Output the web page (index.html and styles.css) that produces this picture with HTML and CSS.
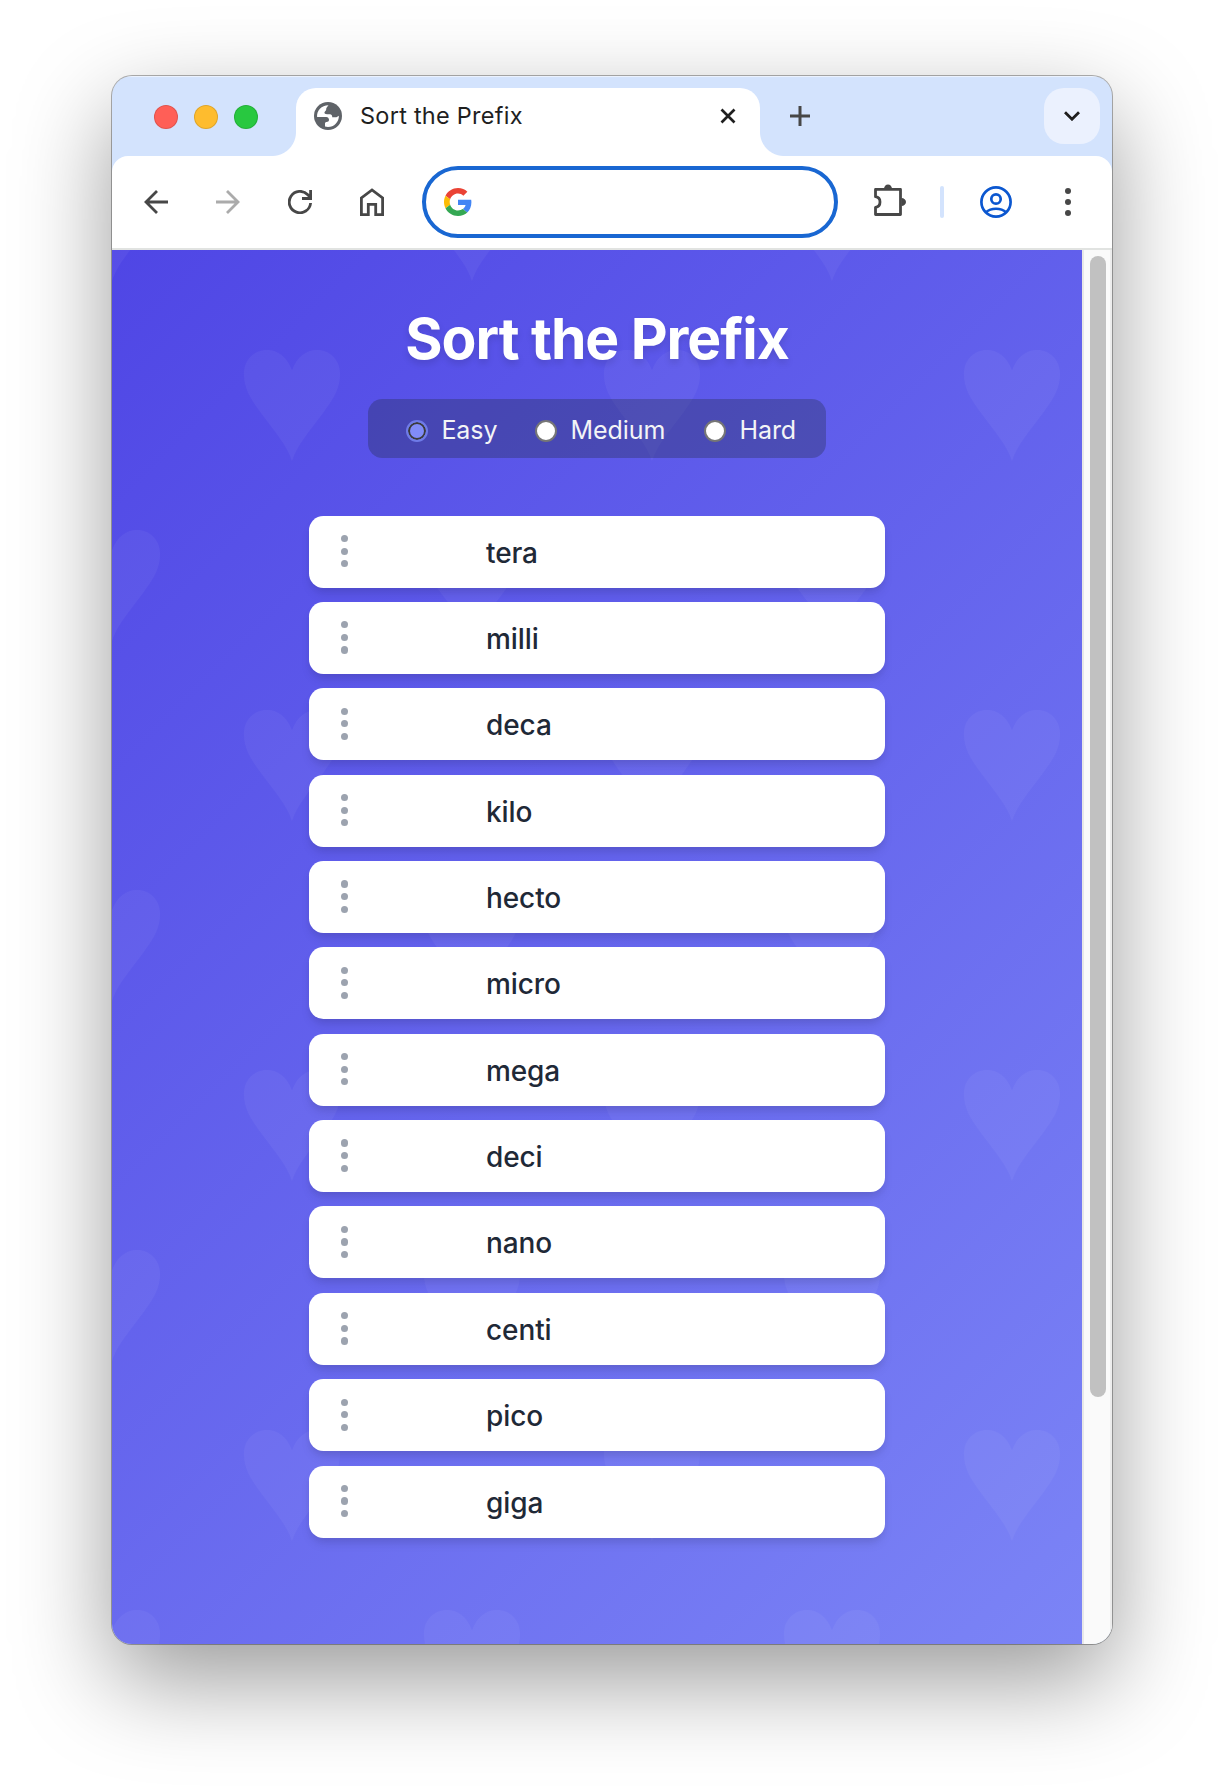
FILE: index.html
```html
<!DOCTYPE html>
<html lang="en">
<head>
<meta charset="utf-8">
<title>Sort the Prefix</title>
<link rel="stylesheet" href="styles.css">
</head>
<body>
<div class="window">
  <header class="tabstrip">
    <div class="lights"><i class="light red"></i><i class="light yellow"></i><i class="light green"></i></div>
    <div class="tab">
      <svg class="globe" width="28" height="28" viewBox="0 0 28 28"><circle cx="14" cy="14" r="14" fill="#5f6368"/><path fill="#fff" d="M14.500 3.200C13.500 4.500 12 5.600 12.200 7.200C12.400 8.700 11 9 10.500 10.200C10 11.500 11.500 12.200 13 12.200L16 12.200C17.300 12.200 18.200 13.200 18.200 14.500L18.200 15.200L21.500 15.200C22.800 15.200 23.800 14.500 24.900 13.700C25 20 20 25 14 25C13 25 12 24.800 11 24.500L11 21.500C11 20.700 11.700 20 12.500 20C14 20 15 19 15 17.700C15 16.200 13.800 15 12.300 15L3.100 15C2.500 8.500 7.500 3.300 14.500 3.200Z"/></svg>
      <span class="tab-title">Sort the Prefix</span>
      <svg class="close" width="16" height="16" viewBox="0 0 16 16"><path d="M1.500 1.500L14.500 14.500M14.500 1.500L1.500 14.500" stroke="#1f1f1f" stroke-width="2.700" fill="none"/></svg>
    </div>
    <svg class="plus" width="20" height="20" viewBox="0 0 20 20"><path d="M10 0V20M0 10H20" stroke="#474747" stroke-width="3" fill="none"/></svg>
    <div class="tab-search"><svg width="16" height="10" viewBox="0 0 16 10"><path d="M1 1.200L8 8.200L15 1.200" stroke="#1f1f1f" stroke-width="2.800" fill="none"/></svg></div>
  </header>
  <nav class="toolbar">
    <svg width="24" height="24" viewBox="0 0 24 24"><path d="M24 12H2M13 1L2 12L13 23" class="stroke"/></svg>
    <svg class="faded" width="24" height="24" viewBox="0 0 24 24"><path d="M0 12H22M11 1L22 12L11 23" class="stroke"/></svg>
    <svg width="24" height="24" viewBox="0 0 24 24"><path d="M22.600 13A10.700 10.700 0 1 1 19.800 4.800L22.500 7.600M22.600 0V8.500H14" class="stroke"/></svg>
    <svg class="home" width="24" height="28" viewBox="0 0 24 28"><path d="M1.400 26.600V10L12 2L22.600 10V26.600H15.700V16.400H8.300V26.600Z" class="stroke"/></svg>
    <div class="omnibox">
      <svg width="28" height="28" viewBox="0 0 48 48"><path fill="#ea4335" d="M24 9.500c3.540 0 6.710 1.220 9.210 3.600l6.850-6.850C35.900 2.380 30.470 0 24 0 14.620 0 6.510 5.380 2.560 13.220l7.980 6.190C12.430 13.720 17.740 9.500 24 9.500z"/><path fill="#4285f4" d="M46.980 24.550c0-1.570-.15-3.090-.38-4.550H24v9.020h12.940c-.58 2.960-2.260 5.480-4.780 7.180l7.730 6c4.510-4.180 7.090-10.360 7.090-17.650z"/><path fill="#fbbc05" d="M10.530 28.590c-.48-1.450-.76-2.990-.76-4.590s.27-3.140.76-4.590l-7.980-6.190C.92 16.460 0 20.120 0 24c0 3.880.92 7.540 2.560 10.780l7.970-6.190z"/><path fill="#34a853" d="M24 48c6.480 0 11.930-2.130 15.890-5.810l-7.730-6c-2.150 1.450-4.920 2.300-8.160 2.300-6.260 0-11.570-4.220-13.470-9.910l-7.980 6.190C6.510 42.620 14.620 48 24 48z"/></svg>
    </div>
    <svg class="puzzle" width="32" height="32" viewBox="0 0 32 32"><path d="M1.500 5.400H26.500V30.500H1.500V23.300C7.500 22.500 7.500 13.500 1.500 12.700Z" class="stroke" stroke-linejoin="round"/><path d="M10 5A4 4.500 0 0 1 18 5ZM27.500 14A4.500 4 0 0 1 27.500 22Z" fill="#474747"/></svg>
    <i class="divider"></i>
    <svg class="profile" width="32" height="32" viewBox="0 0 32 32" fill="none" stroke="#0b57d0" stroke-width="2.700"><circle cx="16" cy="16" r="14.600"/><circle cx="16" cy="13" r="4.700"/><path d="M6 26.200C11 21.600 21 21.600 26 26.200"/></svg>
    <svg class="menu" width="6" height="28" viewBox="0 0 6 28" fill="#474747"><circle cx="3" cy="3" r="3"/><circle cx="3" cy="14" r="3"/><circle cx="3" cy="25" r="3"/></svg>
  </nav>
  <div class="viewport">
    <main class="page">
      <h1>Sort the Prefix</h1>
      <div class="levels">
        <label class="level easy"><i class="radio checked"></i>Easy</label>
        <label class="level medium"><i class="radio"></i>Medium</label>
        <label class="level hard"><i class="radio"></i>Hard</label>
      </div>
      <ul class="list">
        <li><span class="grip"><i></i><i></i><i></i></span>tera</li>
        <li><span class="grip"><i></i><i></i><i></i></span>milli</li>
        <li><span class="grip"><i></i><i></i><i></i></span>deca</li>
        <li><span class="grip"><i></i><i></i><i></i></span>kilo</li>
        <li><span class="grip"><i></i><i></i><i></i></span>hecto</li>
        <li><span class="grip"><i></i><i></i><i></i></span>micro</li>
        <li><span class="grip"><i></i><i></i><i></i></span>mega</li>
        <li><span class="grip"><i></i><i></i><i></i></span>deci</li>
        <li><span class="grip"><i></i><i></i><i></i></span>nano</li>
        <li><span class="grip"><i></i><i></i><i></i></span>centi</li>
        <li><span class="grip"><i></i><i></i><i></i></span>pico</li>
        <li><span class="grip"><i></i><i></i><i></i></span>giga</li>
      </ul>
    </main>
    <div class="scrollbar"><div class="thumb"></div></div>
  </div>
</div>
</body>
</html>
```
FILE: styles.css
```css
* { box-sizing: border-box; }
body { margin: 0; padding: 76px 112px 0; height: 1792px; overflow: hidden; background: #fff; font-family: Inter, "Liberation Sans", sans-serif; }
svg { display: block; flex: none; }
i { display: block; flex: none; }

.window { width: 1000px; height: 1568px; border-radius: 20px; overflow: hidden; background: #d3e3fd; display: flex; flex-direction: column; box-shadow: 0 0 0 1px rgba(0,0,0,.3), 0 36px 96px rgba(0,0,0,.4); }

.tabstrip { height: 80px; flex: none; display: flex; align-items: flex-start; padding: 12px 12px 0 42px; box-shadow: inset 0 2px 1px -1px rgba(255,255,255,.6); }
.lights { display: flex; gap: 16px; padding-top: 17px; width: 142px; flex: none; }
.light { width: 24px; height: 24px; border-radius: 50%; border: 1px solid rgba(0,0,0,.12); }
.red { background: #ff5f57; }
.yellow { background: #febc2e; }
.green { background: #28c840; }
.tab { position: relative; width: 464px; height: 68px; background: #fff; border-radius: 20px 20px 0 0; display: flex; align-items: center; padding: 0 24px 12px 18px; }
.tab::before, .tab::after { content: ""; position: absolute; bottom: 0; width: 24px; height: 24px; }
.tab::before { left: -24px; background: radial-gradient(circle at 0 0, transparent 23.5px, #fff 24.5px); }
.tab::after { right: -24px; background: radial-gradient(circle at 100% 0, transparent 23.5px, #fff 24.5px); }
.tab-title { margin-left: 18px; font-size: 23.5px; line-height: 30px; letter-spacing: .25px; color: #1f1f1f; flex: 1; white-space: nowrap; }
.plus { margin: 18px 0 0 30px; }
.tab-search { margin-left: auto; width: 56px; height: 56px; border-radius: 20px; background: #ebf1fe; display: flex; align-items: center; justify-content: center; }

.toolbar { height: 94px; flex: none; background: #fff; border-radius: 16px 16px 0 0; border-bottom: 2px solid #e1e3e1; display: flex; align-items: center; padding: 0 0 0 32px; }
.toolbar > svg + svg { margin-left: 48px; }
.stroke { fill: none; stroke: #474747; stroke-width: 2.8; }
.faded { opacity: .45; }
.omnibox { width: 416px; height: 72px; margin-left: 38px; border: 4px solid #1967d2; border-radius: 36px; display: flex; align-items: center; padding-left: 18px; }
.puzzle { margin: -4px 0 0 36px; }
.divider { width: 4px; height: 32px; border-radius: 2px; background: #d3e3fd; margin-left: 34px; }
.profile { margin-left: 36px; }
.toolbar > .menu { margin-left: 53px; }

.viewport { flex: 1; display: flex; min-height: 0; }
.page { width: 970px; display: flex; flex-direction: column; align-items: center; background-image: url("data:image/svg+xml,%3Csvg xmlns='http://www.w3.org/2000/svg' width='360' height='360'%3E%3Cg fill='%23fff' fill-opacity='.045'%3E%3Cpath id='h' transform='translate(180 100)' d='M0 20.500C-5 7-14 0-25 0C-38 0-48 10-48 24C-48 38-42 48-31 63C-17 82-5 95 0 111C5 95 17 82 31 63C42 48 48 38 48 24C48 10 38 0 25 0C14 0 5 7 0 20.500Z'/%3E%3Cuse href='%23h' x='-180' y='180'/%3E%3Cuse href='%23h' x='180' y='180'/%3E%3Cuse href='%23h' x='-180' y='-180'/%3E%3Cuse href='%23h' x='180' y='-180'/%3E%3C/g%3E%3C/svg%3E"), linear-gradient(135deg, #4f46e5, #818cf8); background-size: 360px 360px, 100% 1688px; }
h1 { margin: 54px 0 0; font-size: 57px; line-height: 70px; font-weight: 700; letter-spacing: -1.050px; color: #fff; text-shadow: 0 4px 7px rgba(0,0,0,.12); white-space: nowrap; }
.levels { margin-top: 25px; width: 458px; height: 59px; border-radius: 14.4px; background: rgba(31,41,55,.3); display: flex; align-items: center; padding-left: 38px; color: #f3f4f6; font-size: 25px; letter-spacing: -.05px; }
.level { display: flex; align-items: center; gap: 13.400px; line-height: 28px; white-space: nowrap; padding-top: 3px; }
.easy { width: 129px; }
.medium { width: 169px; }
.radio { margin-top: 1px; width: 22px; height: 22px; border-radius: 50%; background: #fff; border: 2px solid #767676; }
.checked { background: #818cf8; border: 2px solid #6f7be8; box-shadow: inset 0 0 0 2px #3b3b3b; }
.list { list-style: none; margin: 57.600px 0 0; padding: 0; width: 576px; display: flex; flex-direction: column; gap: 14.370px; }
.list li { height: 72px; background: #fff; border-radius: 14.4px; display: flex; align-items: center; padding: 2px 0 0 32px; color: #1f2937; font-size: 28px; font-weight: 500; letter-spacing: -.1px; box-shadow: 0 7px 11px -2px rgba(0,0,0,.1), 0 4px 7px -2px rgba(0,0,0,.06); }
.grip { width: 145px; display: flex; flex-direction: column; gap: 5.400px; margin-top: -3px; }
.grip i { width: 7.200px; height: 7.200px; border-radius: 50%; background: #9ca3af; }
.scrollbar { width: 30px; background: #fafafa; border-left: 2px solid #e8e8e8; border-right: 2px solid #ededed; padding: 6px 0 0 6px; }
.thumb { width: 16px; height: 1141px; border-radius: 8px; background: #c1c1c1; }
```
